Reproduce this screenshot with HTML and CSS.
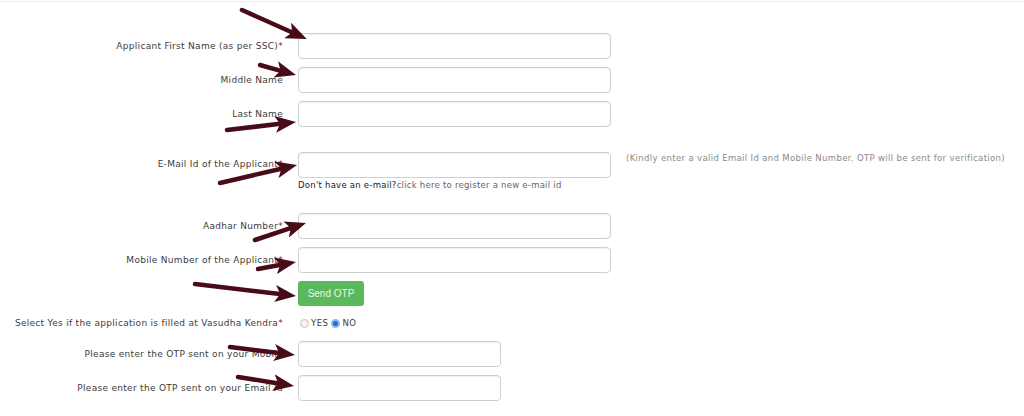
FILE: index.html
```html
<!DOCTYPE html>
<html>
<head>
  <meta name="viewport" content="width=device-width, initial-scale=1">
  <title>Applicant Registration</title>
  <link rel="stylesheet" href="styles.css">
</head>
<body>
  <div class="top-rule"></div>
  <form class="reg-form">
    <div class="form-row">
      <label class="field-label">Applicant First Name (as per SSC)<span class="req">*</span></label>
      <input class="text-box" type="text">
    </div>
    <div class="form-row">
      <label class="field-label">Middle Name</label>
      <input class="text-box" type="text">
    </div>
    <div class="form-row">
      <label class="field-label">Last Name</label>
      <input class="text-box" type="text">
    </div>
    <div class="form-row email-row">
      <label class="field-label">E-Mail Id of the Applicant<span class="req">*</span></label>
      <div class="field-stack">
        <input class="text-box" type="text">
        <p class="email-help">Don't have an e-mail?<a class="email-link">click here to register a new e-mail id</a></p>
      </div>
      <p class="side-note">(Kindly enter a valid Email Id and Mobile Number. OTP will be sent for verification)</p>
    </div>
    <div class="form-row aadhar-row">
      <label class="field-label">Aadhar Number<span class="req">*</span></label>
      <input class="text-box" type="text">
    </div>
    <div class="form-row">
      <label class="field-label">Mobile Number of the Applicant<span class="req">*</span></label>
      <input class="text-box" type="text">
    </div>
    <div class="form-row">
      <span class="field-label"></span>
      <div><button type="button" class="otp-button">Send OTP</button></div>
    </div>
    <div class="form-row radio-row">
      <label class="field-label">Select Yes if the application is filled at Vasudha Kendra<span class="req">*</span></label>
      <div class="radio-group">
        <input class="radio-dot" type="radio" name="kendra"><span class="radio-text">YES</span>
        <input class="radio-dot" type="radio" name="kendra" checked><span class="radio-text">NO</span>
      </div>
    </div>
    <div class="form-row">
      <label class="field-label">Please enter the OTP sent on your Mobile</label>
      <input class="text-box short-box" type="text">
    </div>
    <div class="form-row">
      <label class="field-label">Please enter the OTP sent on your Email Id</label>
      <input class="text-box short-box" type="text">
    </div>
  </form>

  <!-- pointer arrows drawn over the form -->
  <svg class="arrow-layer" width="1024" height="416" viewBox="0 0 1024 416">
    <defs>
      <marker id="head" markerUnits="userSpaceOnUse" viewBox="0 0 21 17" markerWidth="21" markerHeight="17" refX="7" refY="8.5" orient="auto">
        <path d="M0,0 L21,8.5 L0,17 L5,8.5 z" fill="#480c19"/>
      </marker>
    </defs>
    <g stroke="#480c19" stroke-width="4.5" stroke-linecap="round" marker-end="url(#head)">
      <line x1="242" y1="10" x2="294" y2="33.3"/>
      <line x1="260" y1="65" x2="282.5" y2="71.3"/>
      <line x1="227" y1="130" x2="282.1" y2="123.6"/>
      <line x1="220" y1="183" x2="283.4" y2="168.2"/>
      <line x1="255" y1="240" x2="292.7" y2="227.4"/>
      <line x1="258" y1="269" x2="282.2" y2="264.5"/>
      <line x1="195" y1="284" x2="282.1" y2="294.3"/>
      <line x1="230" y1="347" x2="281.1" y2="353.3"/>
      <line x1="238" y1="377" x2="280.2" y2="383.8"/>
    </g>
  </svg>
</body>
</html>
```

FILE: styles.css
```css
html, body {
  margin: 0;
  background-color: #ffffff;
}

body {
  position: relative;
  font-family: "DejaVu Sans", Verdana, sans-serif;
  font-size: 9px;
  letter-spacing: 0.3px;
  color: #3c3c3c;
}

.top-rule {
  height: 1px;
  margin-top: 1px;
  background-color: #ececec;
}

.reg-form {
  display: flex;
  flex-direction: column;
  gap: 8px;
  padding-top: 31px;
}

.form-row {
  display: grid;
  grid-template-columns: 283px 313px auto;
  column-gap: 15px;
  align-items: center;
}

.field-label {
  text-align: right;
  white-space: nowrap;
}

.req {
  color: #8b1a1a;
}

.text-box {
  box-sizing: border-box;
  height: 26px;
  width: 313px;
  margin: 0;
  border: 1px solid #cfcfcf;
  border-radius: 4px;
  box-shadow: inset 0 1px 1px rgba(0, 0, 0, 0.06);
  background-color: #fff;
}

.short-box {
  width: 203px;
}

.email-row {
  margin-top: 17px;
  align-items: start;
}

.email-row .field-label {
  margin-top: 7px;
}

.field-stack {
  display: flex;
  flex-direction: column;
}

.email-help {
  margin: 2px 0 0;
  font-size: 8.5px;
  letter-spacing: 0.25px;
  line-height: 11px;
  color: #222;
}

.email-link {
  color: #666;
}

.side-note {
  margin: 1px 0 0;
  font-size: 8.5px;
  letter-spacing: 0.35px;
  color: #8a8a8a;
  white-space: nowrap;
}

.aadhar-row {
  margin-top: 14px;
}

.otp-button {
  height: 25px;
  width: 66px;
  padding: 0;
  border: none;
  border-radius: 3px;
  background-color: #5cb85c;
  color: #eaf6ea;
  font-family: "Liberation Sans", Arial, sans-serif;
  font-size: 10px;
  letter-spacing: 0;
}

.radio-row {
  margin-top: 4px;
  margin-bottom: 5px;
}

.radio-group {
  display: flex;
  align-items: center;
  font-size: 8.5px;
  letter-spacing: 0.5px;
}

.radio-text {
  margin-left: 2px;
}

.radio-dot {
  appearance: none;
  -webkit-appearance: none;
  box-sizing: border-box;
  width: 9px;
  height: 9px;
  margin: 0 0 0 2px;
  border: 1px solid #c4c4c4;
  border-radius: 50%;
  background-color: #f4f4f4;
}

.radio-dot:checked {
  margin-left: 3px;
  border: 2px solid #8fb8f0;
  background-color: #1e6fd9;
}

.arrow-layer {
  position: absolute;
  top: 0;
  left: 0;
  pointer-events: none;
}
```
